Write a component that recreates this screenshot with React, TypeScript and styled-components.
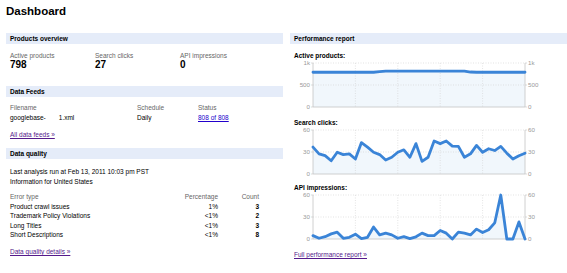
import React from "react";
import styled, { createGlobalStyle } from "styled-components";

const GlobalStyle = createGlobalStyle`
  html, body {
    margin: 0;
    padding: 0;
    background: #ffffff;
  }
  body {
    font-family: "Liberation Sans", Arial, Helvetica, sans-serif;
    color: #000000;
  }
`;

const Page = styled.div`
  padding: 0 6px;
  width: 561px;
`;

const Title = styled.h1`
  margin: 0 0 15px;
  padding-top: 4px;
  height: 14px;
  font-size: 11.5px;
  line-height: 14px;
  font-weight: bold;
`;

const Columns = styled.div`
  display: grid;
  grid-template-columns: 277px 277px;
  column-gap: 7px;
  align-items: start;
`;

const Column = styled.div`
  display: flex;
  flex-direction: column;
`;

const SectionBar = styled.div<{ $top?: number }>`
  margin-top: ${(p) => p.$top ?? 0}px;
  height: 11px;
  line-height: 11px;
  padding-left: 4px;
  background: #e5ecf9;
  font-size: 6.5px;
  font-weight: bold;
`;

const Block = styled.div<{ $top: number }>`
  margin-top: ${(p) => p.$top}px;
  padding-left: 4px;
`;

const StatsRow = styled.div`
  display: grid;
  grid-template-columns: 85px 85px 1fr;
`;

const StatLabel = styled.div`
  font-size: 6.5px;
  line-height: 9px;
  color: #666666;
`;

const StatValue = styled.div`
  font-size: 10px;
  line-height: 10px;
  font-weight: bold;
`;

const FeedGrid = styled.div`
  display: grid;
  grid-template-columns: 127px 61px 1fr;
  font-size: 6.5px;
  line-height: 10px;
`;

const Muted = styled.div`
  color: #666666;
`;

const Gap = styled.span`
  display: inline-block;
  width: 13px;
`;

const Link = styled.a<{ $visited?: boolean }>`
  color: ${(p) => (p.$visited ? "#551a8b" : "#2200cc")};
  text-decoration: underline;
  cursor: pointer;
`;

const LinkLine = styled.div<{ $top: number }>`
  margin-top: ${(p) => p.$top}px;
  padding-left: 4px;
  font-size: 6.5px;
  line-height: 10px;
`;

const TextLine = styled.div`
  font-size: 6.5px;
  line-height: 10px;
`;

const ErrorTable = styled.div`
  display: grid;
  grid-template-columns: 150px 58px 41px;
  font-size: 6.5px;
  line-height: 9.6px;
`;

const Cell = styled.div<{ $align?: "right"; $bold?: boolean; $muted?: boolean }>`
  text-align: ${(p) => p.$align ?? "left"};
  font-weight: ${(p) => (p.$bold ? "bold" : "normal")};
  color: ${(p) => (p.$muted ? "#666666" : "#000000")};
`;

const ChartTitle = styled.div<{ $top: number }>`
  margin-top: ${(p) => p.$top}px;
  padding-left: 4px;
  font-size: 6.5px;
  line-height: 8px;
  font-weight: bold;
`;

const ChartSvg = styled.svg`
  display: block;
  overflow: visible;
`;

const errors = [
  { type: "Product crawl issues", pct: "1%", count: 3 },
  { type: "Trademark Policy Violations", pct: "<1%", count: 2 },
  { type: "Long Titles", pct: "<1%", count: 3 },
  { type: "Short Descriptions", pct: "<1%", count: 8 },
];

const activeProducts = [
  790, 790, 790, 790, 790, 790, 790, 790, 790, 790, 790, 805, 815, 815, 815,
  815, 815, 815, 815, 815, 815, 815, 815, 815, 815, 815, 795, 790, 790, 790,
  790, 790, 790, 790, 790, 790,
];

const searchClicks = [
  36.7, 27.5, 25, 18, 29.7, 26.5, 27.5, 20.5, 42.8, 36.7, 29.7, 26.5, 19, 22.8,
  29.7, 33, 22.8, 41.4, 17.2, 22.8, 45, 41.4, 45, 38, 37.7, 22.8, 27.5, 39,
  29.7, 34.4, 32, 37.7, 28.4, 20.5, 25, 28.4,
];

const apiImpressions = [
  4.6, 1, 3.2, 7, 9.3, 1, 2.3, 6.5, 0.5, 2.3, 16.3, 5.6, 8, 5.6, 1, 3.2, 0.5, 3,
  8, 4.6, 4.6, 11.6, 8, 0, 9.3, 8, 5.6, 13.5, 8.8, 12.6, 21.9, 62, 0, 0, 23.3, 0,
];

interface ChartProps {
  data: number[];
  max: number;
  labels: [string, string, string];
}

const CW = 277;
const CH = 52;
const X0 = 23;
const X1 = 235;
const TOP = 3;
const BOTTOM = 47;

function LineChart({ data, max, labels }: ChartProps) {
  const step = (X1 - X0) / (data.length - 1);
  const pts = data.map((v, i) => {
    const y = BOTTOM - (Math.min(v, max) / max) * (BOTTOM - TOP);
    return `${(X0 + i * step).toFixed(2)},${y.toFixed(2)}`;
  });
  const area = `${X0},${BOTTOM} ${pts.join(" ")} ${X1},${BOTTOM}`;
  const mid = (TOP + BOTTOM) / 2;
  const levels = [BOTTOM, mid, TOP];

  return (
    <ChartSvg width={CW} height={CH} viewBox={`0 0 ${CW} ${CH}`}>
      <polygon points={area} fill="#f1f7fc" />
      {[1, 2, 3, 4].map((i) => {
        const x = X0 + ((X1 - X0) / 5) * i;
        return (
          <line
            key={`v-${i}`}
            x1={x}
            x2={x}
            y1={TOP}
            y2={BOTTOM}
            stroke="#d2d2d2"
            strokeWidth={0.6}
            strokeDasharray="1 1.5"
          />
        );
      })}
      {[TOP, mid].map((y) => (
        <line
          key={`h-${y}`}
          x1={X0}
          x2={X1}
          y1={y}
          y2={y}
          stroke="#d2d2d2"
          strokeWidth={0.6}
          strokeDasharray="1 1.5"
        />
      ))}
      <line x1={X0} x2={X0} y1={TOP} y2={BOTTOM} stroke="#c4c4c4" strokeWidth={0.8} />
      <line x1={X1} x2={X1} y1={TOP} y2={BOTTOM} stroke="#c4c4c4" strokeWidth={0.8} />
      <line x1={X0} x2={X1} y1={BOTTOM} y2={BOTTOM} stroke="#c4c4c4" strokeWidth={0.8} />
      {levels.map((y, i) => (
        <g key={`t-${i}`}>
          <line x1={X0 - 2} x2={X0} y1={y} y2={y} stroke="#c4c4c4" strokeWidth={0.6} />
          <line x1={X1} x2={X1 + 2} y1={y} y2={y} stroke="#c4c4c4" strokeWidth={0.6} />
          <text
            x={X0 - 3}
            y={y + 2.2}
            textAnchor="end"
            fontSize={6.2}
            fill="#999999"
            fontFamily="'Liberation Sans', Arial, sans-serif"
          >
            {labels[i]}
          </text>
          <text
            x={X1 + 3}
            y={y + 2.2}
            textAnchor="start"
            fontSize={6.2}
            fill="#999999"
            fontFamily="'Liberation Sans', Arial, sans-serif"
          >
            {labels[i]}
          </text>
        </g>
      ))}
      <polyline
        points={pts.join(" ")}
        fill="none"
        stroke="#3a84d7"
        strokeWidth={2.8}
        strokeLinejoin="round"
        strokeLinecap="round"
      />
    </ChartSvg>
  );
}

export default function App() {
  return (
    <Page>
      <GlobalStyle />
      <Title>Dashboard</Title>
      <Columns>
        <Column>
          <SectionBar>Products overview</SectionBar>
          <Block $top={7}>
            <StatsRow>
              <div>
                <StatLabel>Active products</StatLabel>
                <StatValue>798</StatValue>
              </div>
              <div>
                <StatLabel>Search clicks</StatLabel>
                <StatValue>27</StatValue>
              </div>
              <div>
                <StatLabel>API impressions</StatLabel>
                <StatValue>0</StatValue>
              </div>
            </StatsRow>
          </Block>

          <SectionBar $top={16}>Data Feeds</SectionBar>
          <Block $top={6}>
            <FeedGrid>
              <Muted>Filename</Muted>
              <Muted>Schedule</Muted>
              <Muted>Status</Muted>
              <div>
                googlebase-<Gap />1.xml
              </div>
              <div>Daily</div>
              <div>
                <Link>808 of 808</Link>
              </div>
            </FeedGrid>
          </Block>
          <LinkLine $top={7}>
            <Link $visited>All data feeds »</Link>
          </LinkLine>

          <SectionBar $top={8}>Data quality</SectionBar>
          <Block $top={8}>
            <TextLine>Last analysis run at Feb 13, 2011 10:03 pm PST</TextLine>
            <TextLine>Information for United States</TextLine>
          </Block>
          <Block $top={5}>
            <ErrorTable>
              <Cell $muted>Error type</Cell>
              <Cell $muted $align="right">
                Percentage
              </Cell>
              <Cell $muted $align="right">
                Count
              </Cell>
              {errors.map((e) => (
                <React.Fragment key={e.type}>
                  <Cell>{e.type}</Cell>
                  <Cell $align="right">{e.pct}</Cell>
                  <Cell $align="right" $bold>
                    {e.count}
                  </Cell>
                </React.Fragment>
              ))}
            </ErrorTable>
          </Block>
          <LinkLine $top={7}>
            <Link $visited>Data quality details »</Link>
          </LinkLine>
        </Column>

        <Column>
          <SectionBar>Performance report</SectionBar>
          <ChartTitle $top={8}>Active products:</ChartTitle>
          <LineChart data={activeProducts} max={1000} labels={["0", "500", "1k"]} />
          <ChartTitle $top={7}>Search clicks:</ChartTitle>
          <LineChart data={searchClicks} max={60} labels={["0", "30", "60"]} />
          <ChartTitle $top={5}>API impressions:</ChartTitle>
          <LineChart data={apiImpressions} max={60} labels={["0", "30", "60"]} />
          <LinkLine $top={6}>
            <Link $visited>Full performance report »</Link>
          </LinkLine>
        </Column>
      </Columns>
    </Page>
  );
}
